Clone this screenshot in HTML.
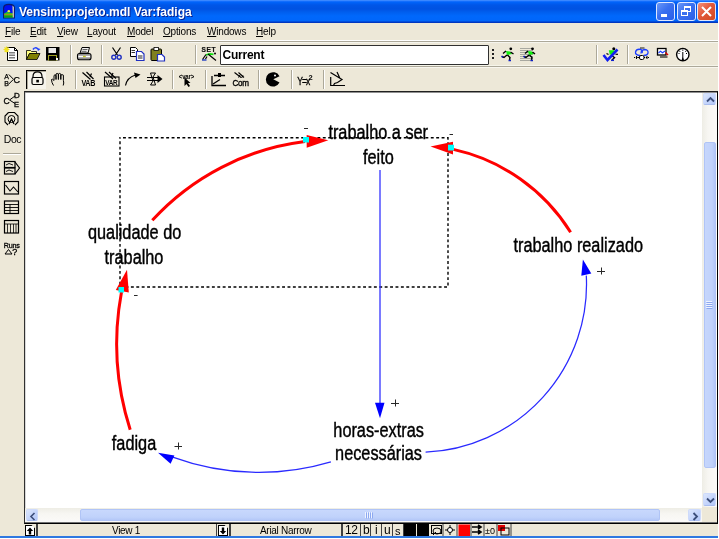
<!DOCTYPE html>
<html><head><meta charset="utf-8">
<style>
*{margin:0;padding:0;box-sizing:border-box}
body{-webkit-font-smoothing:antialiased}
html,body{width:719px;height:539px;overflow:hidden;background:#fff;font-family:"Liberation Sans",sans-serif}
.a{position:absolute}
#title{left:0;top:0;width:718px;height:23px;background:linear-gradient(to bottom,#5a9cff 0px,#1a72ff 1px,#0062f8 2.5px,#0056e8 5px,#0052e2 9px,#005eee 12px,#0068fc 16px,#0066fa 21px,#0036c0 22px)}
#ttext{left:19px;top:5px;color:#fff;font-weight:bold;font-size:12px;letter-spacing:0px;white-space:nowrap;text-shadow:1px 1px 0 #0a1e8a}
.tb{top:2px;width:19px;height:19px;border:1px solid #dfe8ff;border-radius:3px;background:linear-gradient(135deg,#6a98f8,#3a70f0 45%,#2a5ee8)}
#menu{left:0;top:23px;width:718px;height:18px;background:#ede8d8}
.mi{top:26px;font-size:10px;letter-spacing:-0.2px;color:#000;white-space:nowrap}
.sepH{height:1px;background:#aca899}
.sepHw{height:1px;background:#fff}
.tbar{background:#ede8d8}
.vs{width:1px;background:#aca899;border-right:1px solid #fff;box-sizing:content-box}
.sbb{border-radius:2px;background:linear-gradient(135deg,#dce6fc,#c2d3fb 60%,#b4c8f8);border:1px solid #cddafb;border-bottom-color:#a9bdf0}
.sbt{border-radius:2px;background:#c0d2fb;border:1px solid #b0c4f6}
.st{top:525px;font-size:10px;letter-spacing:-0.3px;color:#000;white-space:nowrap;line-height:12px}
</style></head>
<body>
<div id="wrap" style="position:absolute;left:0;top:0;width:719px;height:539px;will-change:transform">
<!-- window background -->
<div class="a" style="left:0;top:0;width:718px;height:537px;background:#ede8d8"></div>
<div class="a" style="left:718px;top:0;width:1px;height:539px;background:#fff"></div>
<!-- title -->
<div id="title" class="a"></div>
<svg class="a" style="left:2px;top:3px" width="14" height="16" viewBox="0 0 14 16">
<path d="M1 15.5V5Q1 0.8 7 0.8Q13 0.8 13 5V15.5Z" fill="#0a1a70"/>
<path d="M2.2 14.5V5.3Q2.2 2 7 2Q10 2 10.8 3.5V14.5Z" fill="#0010f0"/>
<circle cx="6.8" cy="8.2" r="1.3" fill="#f0f040"/>
<path d="M2.2 10.5L5 9L8 9.8L10.8 10.3V14.5H2.2Z" fill="#20d020"/>
<path d="M2.2 10.8H10.8V12.5H2.2Z" fill="#a08a20"/>
<path d="M2.2 12.5H10.8V14.5H2.2Z" fill="#10a010"/>
<path d="M10.5 2.5L11.8 4V14.5H10.8Z" fill="#e8e4c8"/>
</svg>
<div id="ttext" class="a">Vensim:projeto.mdl Var:fadiga</div>
<div class="a tb" style="left:656px"><div class="a" style="left:4px;top:11px;width:6px;height:2.5px;background:#fff"></div></div>
<div class="a tb" style="left:677px"><div class="a" style="left:6px;top:3px;width:6.5px;height:6px;border:1px solid #fff;border-top-width:2px"></div><div class="a" style="left:3px;top:6.5px;width:6.5px;height:6px;border:1px solid #fff;border-top-width:2px;background:#3a70ef"></div></div>
<div class="a tb" style="left:697px;background:linear-gradient(135deg,#f4907a,#e2583a 45%,#d04a22)"><svg class="a" style="left:3px;top:3px" width="11" height="11"><path d="M1 1L10 10M10 1L1 10" stroke="#fff" stroke-width="2"/></svg></div>

<!-- menu -->
<div id="menu" class="a"></div>
<div class="a mi" style="left:5px"><u>F</u>ile</div>
<div class="a mi" style="left:30px"><u>E</u>dit</div>
<div class="a mi" style="left:57px"><u>V</u>iew</div>
<div class="a mi" style="left:87px"><u>L</u>ayout</div>
<div class="a mi" style="left:127px"><u>M</u>odel</div>
<div class="a mi" style="left:163px"><u>O</u>ptions</div>
<div class="a mi" style="left:207px"><u>W</u>indows</div>
<div class="a mi" style="left:256px"><u>H</u>elp</div>
<div class="a sepHw" style="left:0;top:40px;width:718px"></div>
<div class="a sepH" style="left:0;top:41px;width:718px"></div>
<div class="a sepHw" style="left:0;top:42px;width:718px;background:#f6f5ee"></div>
<div class="a sepHw" style="left:0;top:65px;width:718px;background:#f6f5ea"></div>
<div class="a sepH" style="left:0;top:66px;width:718px"></div>
<div class="a sepHw" style="left:0;top:67px;width:718px;background:#f8f6ee"></div>


<!-- toolbar separators -->
<div class="a vs" style="left:70px;top:45px;height:19px"></div>
<div class="a vs" style="left:101px;top:45px;height:19px"></div>
<div class="a vs" style="left:195px;top:45px;height:19px"></div>
<div class="a vs" style="left:596px;top:45px;height:19px"></div>
<div class="a vs" style="left:627px;top:45px;height:19px"></div>
<div class="a vs" style="left:75px;top:70px;height:19px"></div>
<div class="a vs" style="left:172px;top:70px;height:19px"></div>
<div class="a vs" style="left:205px;top:70px;height:19px"></div>
<div class="a vs" style="left:258px;top:70px;height:19px"></div>
<div class="a vs" style="left:291px;top:70px;height:19px"></div>
<div class="a vs" style="left:323px;top:70px;height:19px"></div>
<div class="a sepH" style="left:3px;top:153px;width:18px"></div>
<div class="a sepHw" style="left:3px;top:154px;width:18px"></div>
<!-- pressed lock button -->
<div class="a" style="left:26px;top:70px;width:20px;height:19px;background:#f6f4ec;border-left:1px solid #000;border-top:1px solid #000;box-shadow:inset 1px 1px 0 #aca899"></div>
<!-- input box -->
<div class="a" style="left:220px;top:45px;width:269px;height:20px;background:#fff;border:1.5px solid #303030;border-radius:1px"></div>
<div class="a" style="left:222.6px;top:47.8px;font-size:12px;font-weight:bold;color:#000;letter-spacing:-0.25px">Current</div>
<svg class="a" style="left:0;top:0" width="719" height="270" viewBox="0 0 719 270">
<!-- New -->
<g>
<path d="M7.5 47.5H14.5L17.5 50.5V60.5H7.5Z" fill="#fff" stroke="#000"/>
<path d="M14.5 47.5V50.5H17.5" fill="none" stroke="#000"/>
<rect x="9" y="52" width="6" height="1.5" fill="#808080"/><rect x="9" y="54.5" width="6" height="1.5" fill="#808080"/><rect x="9" y="57" width="6" height="1.5" fill="#808080"/>
<path d="M6.5 46.5V52.5M3.5 49.5H9.5M4.5 47.5L8.5 51.5M8.5 47.5L4.5 51.5" stroke="#f0e020" stroke-width="1.2"/>
</g>
<!-- Open -->
<g>
<path d="M26.5 50.5H30.5L31.5 51.5H36.5V53.5H29.5L26.5 59.5Z" fill="#ffff80" stroke="#000" stroke-width="0.8"/>
<path d="M26.5 59.5L29.5 53.5H40L37 59.5Z" fill="#808000" stroke="#000" stroke-width="0.8"/>
<path d="M33 49.5Q35 46.5 38 49" fill="none" stroke="#2040ff" stroke-width="1.5"/>
<path d="M37 48L40.5 49L38 51Z" fill="#2040ff"/>
</g>
<!-- Save -->
<g>
<rect x="46" y="47" width="13.5" height="13.5" fill="#000"/>
<rect x="48.5" y="48" width="7.5" height="5" fill="#e8e8e8"/>
<rect x="48" y="55" width="9" height="5.5" fill="#a0a020"/>
<rect x="49" y="56" width="7" height="4.5" fill="#000"/>
<rect x="56" y="58" width="2" height="2" fill="#fff"/>
</g>
<!-- Print -->
<g>
<path d="M82 47.5H89.5L88 53H80Z" fill="#f4f4f4" stroke="#000" stroke-width="1"/>
<path d="M82.5 49.5H87.5M81.5 51.3H86.5" stroke="#505050" stroke-width="0.9"/>
<rect x="77.5" y="53.5" width="13.5" height="6.3" rx="2" fill="#b8b8b8" stroke="#000" stroke-width="1.1"/>
<path d="M78.5 56.5H90" stroke="#fff" stroke-width="1.2"/>
<path d="M83 56.5H85.8" stroke="#c8c820" stroke-width="1.3"/>
<path d="M78.5 54.8H90M78.5 58.3H90" stroke="#606060" stroke-width="0.6"/>
</g>
<!-- Cut -->
<g>
<path d="M112.5 47.5L117.5 55M120.5 47.5L115.5 55" stroke="#000" stroke-width="1.2"/>
<circle cx="113.8" cy="57.2" r="2" fill="none" stroke="#2030c0" stroke-width="1.4"/>
<circle cx="119.2" cy="57.2" r="2" fill="none" stroke="#2030c0" stroke-width="1.4"/>
</g>
<!-- Copy -->
<g>
<path d="M130.5 47.5H135.5L137.5 49.5V56.5H130.5Z" fill="#fff" stroke="#000"/>
<path d="M131.5 50.5H135M131.5 52.5H135" stroke="#000" stroke-width="0.8"/>
<path d="M136.5 51.5H141.5L144 54V60.5H136.5Z" fill="#fff" stroke="#2030c0" stroke-width="1.2"/>
<rect x="138" y="55" width="4.5" height="4" fill="#909090"/>
</g>
<!-- Paste -->
<g>
<rect x="151" y="49" width="10.5" height="11.5" rx="1" fill="#808020" stroke="#000"/>
<rect x="154" y="47.5" width="4.5" height="3" fill="#fff" stroke="#000" stroke-width="0.8"/>
<path d="M157.5 54.5H162L164.5 57V61H157.5Z" fill="#fff" stroke="#2030c0" stroke-width="1.2"/>
</g>
<!-- SET -->
<g>
<text transform="translate(201.6,51.9) scale(1.05,1)" font-family="Liberation Sans" font-weight="bold" font-size="6.3" fill="#101010" stroke="#101010" stroke-width="0.2" letter-spacing="0.5">SET</text>
<path d="M206 55L209.5 53.8L213.5 54.3" fill="none" stroke="#10e010" stroke-width="1.8"/>
<path d="M202.5 59.5L206 54.5M205.5 59L207 56.5M208 54L216 60.5" fill="none" stroke="#000" stroke-width="1.2"/>
<circle cx="215" cy="53.6" r="1" fill="#000"/>
<path d="M202 60H206.5" stroke="#1030c0" stroke-width="1.3"/>
</g>
<!-- drag dots -->
<g fill="#202020"><rect x="492" y="49" width="2" height="2"/><rect x="492" y="53" width="2" height="2"/><rect x="492" y="57" width="2" height="2"/></g>
<!-- Runner -->
<g>
<circle cx="510.8" cy="48.8" r="1.4" fill="#000"/>
<path d="M506 51L510 51.5L512 54L507 55Z" fill="#10f010"/>
<path d="M506 51L503 53.5M510.5 52L513.5 54M507 55L504 57.5L502 56.5M507.5 55L510 57.5L509.5 60" fill="none" stroke="#000" stroke-width="1.4"/>
<path d="M501.5 56L503 57.5M508.5 60.5H511" stroke="#1020c0" stroke-width="1.4"/>
</g>
<!-- Runner2 -->
<g>
<path d="M520 48.5H533M520 50.5H533M520 52.5H533M520 54.5H533M520 56.5H533M520 58.5H533M520 60.5H533" stroke="#a8a8a0" stroke-width="1.1"/>
<circle cx="532.5" cy="48.8" r="1.4" fill="#000"/>
<path d="M528 51L532 51.5L534 54L529 55Z" fill="#10f010"/>
<path d="M528 51L525 53.5M532.5 52L535 54M529 55L526 57.5L524 56.5M529.5 55L532 57.5L531.5 60" fill="none" stroke="#000" stroke-width="1.4"/>
<path d="M523.5 56L525 57.5M530.5 60.5H533" stroke="#1020c0" stroke-width="1.4"/>
</g>
<!-- Check runner -->
<g>
<circle cx="613.8" cy="48.8" r="1.5" fill="#000"/>
<path d="M608.5 54.5L606.5 53.5" stroke="#000" stroke-width="1.3"/>
<path d="M608.8 50.3L614.5 50.3L613.8 53.8L609.8 54.8Z" fill="#10f010"/>
<path d="M615.5 54.3H618" stroke="#000" stroke-width="1.2"/>
<path d="M611.5 55.5L614.5 57.5L612 60" fill="none" stroke="#000" stroke-width="1.4"/>
<path d="M611 60.3H614" stroke="#1020d0" stroke-width="1.5"/>
<path d="M603.5 55L607.5 60L617.5 49.5" fill="none" stroke="#1020f0" stroke-width="2.6"/>
</g>
<!-- loop icon -->
<g>
<path d="M640 55.5Q635 55 635.5 52Q636.5 48.5 641 49.5Q643 50.5 642 53" fill="none" stroke="#1a3cff" stroke-width="1.3"/>
<path d="M641 53.5Q641 50 645 49.5Q648.5 50 648 53Q647.5 55.5 643.5 55.5" fill="none" stroke="#1a3cff" stroke-width="1.3"/>
<path d="M640 48H644.5" stroke="#000" stroke-width="0.9"/>
<path d="M634 57.5H649" stroke="#000" stroke-width="1" stroke-dasharray="1.2 0.8"/>
<path d="M636 56L637.5 57.5L636 59M646.5 56L648 57.5L646.5 59" fill="none" stroke="#000" stroke-width="1"/>
<rect x="639.5" y="55.5" width="4.5" height="4" rx="1.5" fill="#fff" stroke="#000" stroke-width="1"/>
</g>
<!-- graph monitor -->
<g>
<rect x="657.5" y="48.5" width="8.5" height="6.5" fill="#fff" stroke="#000" stroke-width="1.3"/>
<path d="M658.5 53L660.5 51.2L662.5 52.8L665 51" fill="none" stroke="#1a3cff" stroke-width="1.1"/>
<path d="M660 57H667.5" stroke="#000" stroke-width="1.1"/>
<path d="M665.5 52.5L668 55" stroke="#e00000" stroke-width="1.4"/>
</g>
<!-- gauge -->
<g>
<circle cx="682.8" cy="54.6" r="6.2" fill="#fff" stroke="#000" stroke-width="1.4"/>
<path d="M682.8 61V52M682.8 49.5V50.8M679.5 50.8L680 51.8M686 50.8L685.5 51.8M678.5 53.5H679.5M686 53.5H687" stroke="#000" stroke-width="1"/>
<path d="M681.3 61L682.8 57L684.3 61Z" fill="#000"/>
</g>

<!-- ABC -->
<g font-family="Liberation Sans" fill="#000" stroke="#000" stroke-width="0.25">
<text x="4.2" y="78.6" font-size="7">A</text><text x="4.2" y="85.6" font-size="7">B</text>
<path d="M8.8 74.5L13.5 79.3L8.8 84" fill="none" stroke="#000" stroke-width="1"/>
<text x="13.4" y="82.8" font-size="9">C</text>
</g>
<!-- Lock -->
<g>
<path d="M33 78V76.5Q33 71.8 37.5 71.8Q42 71.8 42 76.5V78" fill="none" stroke="#000" stroke-width="1.2"/>
<rect x="32" y="77.5" width="11" height="7" rx="1.5" fill="none" stroke="#000" stroke-width="1.2"/>
<rect x="36.3" y="79.8" width="2.6" height="2.6" fill="#000"/>
</g>
<!-- Hand -->
<g fill="none" stroke="#000" stroke-width="1">
<path d="M54 80.5V75.5Q55 74 56 75.5V79.5M56 79.5V74Q57.2 72.8 58.4 74V79.5M58.4 79.5V74Q59.6 72.8 60.8 74V79.5M60.8 79.5V75.2Q62 74 63.4 75.2V80.5Q64.2 83 63.2 85.5M54 80.5Q52.5 78.5 51.5 79.5Q51.5 82.5 53.5 85.5"/>
</g>
<!-- VAB -->
<g>
<path d="M82.5 72.5L90.5 79.5M86.5 72L93.5 79M91.5 73.5L90 77" fill="none" stroke="#000" stroke-width="1.2"/>
<text transform="translate(81.5,86) scale(0.85,1)" font-family="Liberation Sans" font-weight="bold" font-size="8.5" fill="#000" letter-spacing="-0.5">VAB</text>
</g>
<!-- VAR -->
<g>
<rect x="104.5" y="77" width="14.5" height="9" fill="none" stroke="#000" stroke-width="1.1"/>
<path d="M105 72L113 79M109 72L116 78.5M113 73L111.5 76.5" fill="none" stroke="#000" stroke-width="1.2"/>
<text transform="translate(105.3,85.3) scale(0.85,1)" font-family="Liberation Sans" font-weight="bold" font-size="7.5" fill="#000" letter-spacing="-0.4">VAR</text>
</g>
<!-- curved arrow -->
<g>
<path d="M125.5 85.5Q127 77.5 135.5 75" fill="none" stroke="#000" stroke-width="1.2"/>
<path d="M134 72.5L140.5 74.5L135.5 78Z" fill="#000"/>
</g>
<!-- flow valve -->
<g>
<path d="M147 77.5H158M147 80.5H158" stroke="#000" stroke-width="1.1"/>
<path d="M157.5 75L162.5 79L157.5 83Z" fill="#000"/>
<path d="M150.5 73H155.5L153 77L155.5 85H150.5L153 81Z" fill="none" stroke="#000" stroke-width="1"/>
</g>
<!-- shadow var -->
<g>
<text transform="translate(178.8,78.5) scale(0.8,1)" font-family="Liberation Sans" font-weight="bold" font-size="7.5" fill="#000" letter-spacing="-0.2">&lt;var&gt;</text>
<path d="M184.5 77.5V86L186.5 84L188.5 87L190 86L188 83H190.5Z" fill="#000"/>
</g>
<!-- eq icon -->
<g fill="none" stroke="#000" stroke-width="1.3">
<path d="M212 76V85.5H226"/>
<path d="M213 84L220 79.5M214 75.5H225"/>
</g>
<rect x="218" y="73" width="3" height="4" fill="#000"/>
<!-- Com -->
<g>
<path d="M234.5 72.5L241 77.5M238.5 72.5L244 77.5" fill="none" stroke="#000" stroke-width="1.1"/>
<path d="M241.5 78L243 75.5M238.5 77.5L240 75" fill="none" stroke="#000" stroke-width="1"/>
<text transform="translate(232.5,86) scale(0.9,1)" font-family="Liberation Sans" font-size="9" fill="#000" stroke="#000" stroke-width="0.35" letter-spacing="-0.3">Com</text>
</g>
<!-- pacman -->
<path d="M279.5 76.2A7.2 7.2 0 1 0 279.5 82.6L273.3 79.3Z" fill="#000"/>
<circle cx="275" cy="75.5" r="1" fill="#fff"/>
<!-- Y=x2 -->
<g>
<text transform="translate(297.3,84.5) scale(0.85,1)" font-family="Liberation Sans" font-size="10" fill="#000" stroke="#000" stroke-width="0.3" letter-spacing="-1.2">Y=x</text>
<text x="308.5" y="79.5" font-family="Liberation Sans" font-weight="bold" font-size="7.5" fill="#000">2</text>
</g>
<!-- last icon -->
<g fill="none" stroke="#000" stroke-width="1.2">
<path d="M330.7 77V85.5H345"/>
<path d="M330.5 72.5L342 79.5L337.5 82.5L334.5 83.5L333.5 85.5M337 72L340 78.5"/>
</g>

<!-- left toolbar -->
<g font-family="Liberation Sans" fill="#000">
<text x="3.5" y="103.8" font-size="8.5" stroke="#000" stroke-width="0.3">C</text>
<path d="M15 96L9.5 100L15 103.5" fill="none" stroke="#000" stroke-width="1"/>
<text x="14" y="97.8" font-size="8" stroke="#000" stroke-width="0.3">D</text>
<text x="14" y="106.5" font-size="7.5" stroke="#000" stroke-width="0.3">E</text>
</g>
<g fill="none" stroke="#000">
<path d="M8.5 112.5H14.5L18 116V122L15 125M8 125L5 122V116L8.5 112.5" stroke-width="1.1"/>
<circle cx="11.5" cy="119" r="3.5" stroke-width="1"/>
<path d="M9 124L11.5 119L14 124" stroke-width="1.3"/>
</g>
<text x="3.8" y="143" font-family="Liberation Sans" font-size="10.5" fill="#000" letter-spacing="-0.5">Doc</text>
<g fill="none" stroke="#000" stroke-width="1.2">
<rect x="4.5" y="161.5" width="10.5" height="6"/>
<rect x="4.5" y="168" width="10.5" height="6"/>
<path d="M15 162L19.5 168L15 174"/>
<path d="M6 165L9 163.5L13 165M6 171.5L9 170L13 171.5" stroke-width="0.9"/>
<rect x="4.5" y="181.5" width="14" height="12.5"/>
<path d="M5.5 185L10 191L13.5 187L18 192" stroke-width="1.1"/>
<rect x="4.5" y="201" width="14" height="12.5"/>
<path d="M5 204.5H18M5 207.5H18M5 210.5H18M10 204.5V213" stroke-width="0.9"/>
<rect x="4.5" y="220.5" width="14" height="12.5"/>
<path d="M5 224H18M7.5 224V233M10.5 224V233M13.5 224V233M16 224V233" stroke-width="0.8"/>
</g>
<text transform="translate(3.8,247.8) scale(0.9,1)" font-family="Liberation Sans" font-size="8" fill="#000" stroke="#000" stroke-width="0.3" letter-spacing="-0.3">Runs</text>
<path d="M5 254L8.5 249.5L12 254Z" fill="none" stroke="#000" stroke-width="1"/>
<text x="12.3" y="254.8" font-family="Liberation Sans" font-size="9" fill="#000" stroke="#000" stroke-width="0.3">?</text>
</svg>

<!-- canvas -->
<div class="a" style="left:24px;top:91px;width:694px;height:433px;border-left:1px solid #303030;border-top:1px solid #202020;border-right:1px solid #000;border-bottom:1px solid #000;background:#fff;box-shadow:inset 0 1px 0 #909090,inset 0 -1px 0 #707070,inset 1px 0 0 #d8d8d8"></div>


<!-- diagram -->
<svg class="a" style="left:0;top:0;will-change:transform" width="719" height="539" viewBox="0 0 719 539">
<g font-family="Liberation Sans" font-size="20" fill="#000" stroke="#000" stroke-width="0.42" text-anchor="middle">
<text transform="translate(378.2,139.2) scale(0.815,1)">trabalho a ser</text>
<text transform="translate(378.35,163.7) scale(0.815,1)">feito</text>
<text transform="translate(134.6,239.4) scale(0.815,1)">qualidade do</text>
<text transform="translate(134,263.5) scale(0.815,1)">trabalho</text>
<text transform="translate(578.25,251.7) scale(0.815,1)">trabalho realizado</text>
<text transform="translate(134,449.8) scale(0.815,1)">fadiga</text>
<text transform="translate(378.6,436.5) scale(0.815,1)">horas-extras</text>
<text transform="translate(378.55,460.4) scale(0.815,1)">necessárias</text>
</g>
<rect x="120" y="137.8" width="328" height="149.2" fill="none" stroke="#000" stroke-width="1.4" stroke-dasharray="2.9 2.5" stroke-dashoffset="-3"/>
<!-- red curves -->
<g fill="none" stroke="#ff0000" stroke-width="3" stroke-linecap="butt">
<path d="M152.3 220.3 A249.1 249.1 0 0 1 305.0 141.5"/>
<path d="M570.6 232.2 A184.7 184.7 0 0 0 453.3 149.4"/>
<path d="M130.2 429.8 A281.7 281.7 0 0 1 121.5 292.1"/>
</g>
<g fill="#ff0000">
<path d="M328.3 140.3 L306.7 135 L306.7 147.8 Z"/>
<path d="M430.5 146.4 L453 141.7 L453 154.4 Z"/>
<path d="M127 269.7 L115.8 290 L128.8 292.5 Z"/>
</g>
<g fill="#00ffff">
<rect x="303" y="137" width="6" height="5.5"/>
<rect x="448" y="144.7" width="6" height="5.8"/>
<rect x="118.5" y="287" width="5.5" height="5.5"/>
</g>
<!-- blue curves -->
<g fill="none" stroke="#2a2aff" stroke-width="1.25">
<path d="M380 170 L380 403"/>
<path d="M425.6 452.2 A168.0 168.0 0 0 0 586.3 275.6"/>
<path d="M330.9 461.8 A251.6 251.6 0 0 1 172.7 457.1"/>
</g>
<g fill="#0000ff">
<path d="M380 418.2 L375 402.7 L384.5 402.7 Z"/>
<path d="M582.9 259.5 L581.3 275.7 L591.3 273.5 Z"/>
<path d="M158 452.75 L174.4 455.6 L170.6 463.75 Z"/>
</g>
<!-- signs -->
<g stroke="#282828" stroke-width="1" fill="none">
<path d="M391 403.5h8M395.5 399.5v7"/>
<path d="M597 271.5h8M601.5 267.5v7"/>
<path d="M174.5 446.5h7.5M178.5 442.5v7"/>
<path d="M304 128.5h4"/>
<path d="M449.5 134.5h3.5"/>
<path d="M134 295.5h3.6"/>
</g>
</svg>


<!-- scrollbars -->
<div class="a" style="left:702px;top:93px;width:15px;height:414px;background:linear-gradient(to right,#eeede5,#f7f6f2 40%,#fbfaf8)"></div>
<div class="a" style="left:25px;top:508px;width:677px;height:14px;background:linear-gradient(to bottom,#eeede5,#f7f6f2 40%,#fbfaf8)"></div>
<div class="a" style="left:702px;top:507px;width:15px;height:15px;background:#ede8d8"></div>
<!-- v buttons -->
<div class="a sbb" style="left:703px;top:93px;width:13px;height:12px"><svg class="a" style="left:1.5px;top:2px" width="9" height="7"><path d="M1 5.5L4.5 2L8 5.5" fill="none" stroke="#3c4e7a" stroke-width="1.8"/></svg></div>
<div class="a sbb" style="left:703px;top:493px;width:13px;height:13px"><svg class="a" style="left:2px;top:3px" width="9" height="7"><path d="M1 1.5L4.5 5L8 1.5" fill="none" stroke="#3c4e7a" stroke-width="1.8"/></svg></div>
<div class="a sbt" style="left:703.5px;top:142px;width:12px;height:326px;background:linear-gradient(to right,#c6d6fc,#c0d2fb 70%,#b2c6f7)"></div>
<!-- h buttons -->
<div class="a sbb" style="left:26px;top:509px;width:12px;height:12px"><svg class="a" style="left:1.5px;top:1.5px" width="7" height="9"><path d="M5.5 1L2 4.5L5.5 8" fill="none" stroke="#3c4e7a" stroke-width="1.6"/></svg></div>
<div class="a sbb" style="left:688px;top:509px;width:13px;height:12px"><svg class="a" style="left:3px;top:2px" width="7" height="9"><path d="M1.5 1L5 4.5L1.5 8" fill="none" stroke="#3c4e7a" stroke-width="1.8"/></svg></div>
<div class="a sbt" style="left:80px;top:509px;width:580px;height:12px;background:linear-gradient(to bottom,#c8d8fd,#c0d2fb 70%,#b4c8f8)"></div>


<svg class="a" style="left:364px;top:511px" width="10" height="8"><path d="M1.5 1V7M3.5 1V7M5.5 1V7M7.5 1V7" stroke="#eef3ff" stroke-width="1"/><path d="M2.5 1.5V7.5M4.5 1.5V7.5M6.5 1.5V7.5M8.5 1.5V7.5" stroke="#8ca8f0" stroke-width="1"/></svg>
<svg class="a" style="left:705px;top:300px" width="9" height="10"><path d="M1 1.5H7M1 3.5H7M1 5.5H7M1 7.5H7" stroke="#eef3ff" stroke-width="1"/><path d="M1.5 2.5H7.5M1.5 4.5H7.5M1.5 6.5H7.5M1.5 8.5H7.5" stroke="#8ca8f0" stroke-width="1"/></svg>
<!-- status bar -->
<div class="a" style="left:0;top:524px;width:718px;height:12px;background:#ede8d8"></div>
<div class="a" style="left:25px;top:525px;width:10px;height:11px;border:1px solid #000;background:#fff;clip-path:polygon(0 0,65% 0,100% 30%,100% 100%,0 100%)"></div>
<svg class="a" style="left:25px;top:525px" width="10" height="11"><path d="M5 2.5L1.8 6H3.8V9.5H6.2V6H8.2Z" fill="#000"/></svg>
<div class="a" style="left:36px;top:524px;width:2px;height:12px;background:#404040"></div>
<div class="a st" style="left:112px">View 1</div>
<div class="a" style="left:216px;top:524px;width:1px;height:12px;background:#404040"></div>
<div class="a" style="left:218px;top:525px;width:10px;height:11px;border:1px solid #000;background:#fff;clip-path:polygon(0 0,65% 0,100% 30%,100% 100%,0 100%)"></div>
<svg class="a" style="left:218px;top:525px" width="10" height="11"><path d="M5 9.5L1.8 6H3.8V2.5H6.2V6H8.2Z" fill="#000"/></svg>
<div class="a" style="left:229px;top:524px;width:2px;height:12px;background:#404040"></div>
<div class="a st" style="left:260px">Arial Narrow</div>
<div class="a" style="left:341px;top:524px;width:2px;height:12px;background:#404040"></div>
<div class="a st" style="left:345px;font-size:12px;top:524px;letter-spacing:-0.5px">12</div>
<div class="a" style="left:360px;top:524px;width:1px;height:12px;background:#404040"></div>
<div class="a st" style="left:363px;font-size:12px;top:524px">b</div>
<div class="a" style="left:370px;top:524px;width:1px;height:12px;background:#404040"></div>
<div class="a st" style="left:375px;font-size:12px;top:524px">i</div>
<div class="a" style="left:381px;top:524px;width:1px;height:12px;background:#404040"></div>
<div class="a st" style="left:384px;font-size:12px;top:524px">u</div>
<div class="a" style="left:392px;top:524px;width:1px;height:12px;background:#404040"></div>
<div class="a st" style="left:395px;font-size:11px;top:525px">s</div>
<div class="a" style="left:403px;top:524px;width:1px;height:12px;background:#404040"></div>
<div class="a" style="left:404px;top:524px;width:12px;height:12px;background:#000"></div>
<div class="a" style="left:417px;top:524px;width:12px;height:12px;background:#000"></div>
<svg class="a" style="left:430px;top:524px" width="84" height="12">
<g fill="none" stroke="#000" stroke-width="1">
<rect x="1.5" y="1.5" width="10" height="8"/>
<ellipse cx="7" cy="7" rx="4" ry="3"/>
<path d="M3 11L6 8"/>
<path d="M20 1V11M15 6H25"/>
<circle cx="20" cy="6" r="2.5" fill="#fff"/>
</g>
<rect x="28.5" y="0.5" width="11.5" height="11.5" fill="#ff0000"/>
<path d="M42 3H50M48 1L51 3L48 5M42 8H50M48 6L51 8L48 10" fill="none" stroke="#000" stroke-width="1.6"/>
<text x="55" y="10" font-size="9" font-family="Liberation Sans" fill="#000">±0</text>
<rect x="68" y="1" width="7" height="6" fill="#e00000"/>
<rect x="71" y="4" width="8" height="7" fill="none" stroke="#000"/>
<path d="M41 0V12M54 0V12M67 0V12M81 0V12M13 0V12M27 0V12" stroke="#404040" stroke-width="1"/>
</svg>

<div class="a" style="left:0;top:536px;width:718px;height:2px;background:#2f78e0"></div>
</div>
</body></html>
